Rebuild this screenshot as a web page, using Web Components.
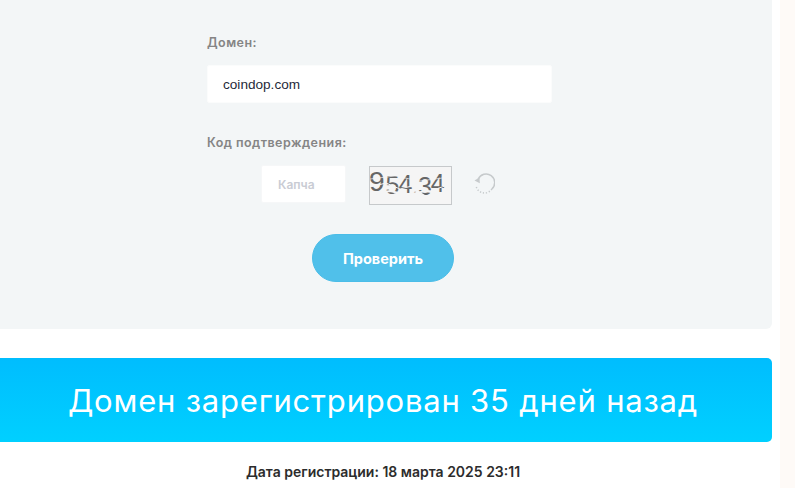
<!DOCTYPE html>
<html><head><meta charset="utf-8">
<style>
html,body{margin:0;padding:0;background:#fff;overflow:hidden;height:488px}
body{display:flex;font-family:"Inter","Noto Sans",sans-serif}
</style></head><body>
<page-shell>
  <check-panel domain="coindop.com"></check-panel>
  <age-banner>Домен зарегистрирован 35 дней назад</age-banner>
  <reg-date>Дата регистрации: 18 марта 2025 23:11</reg-date>
</page-shell>
<script>
const def=(name,html,init)=>customElements.define(name,class extends HTMLElement{
  constructor(){super();this.attachShadow({mode:'open'}).innerHTML=html;}
  connectedCallback(){init&&init(this)}
});
def('page-shell',`<style>
:host{display:flex;width:801px;height:488px;margin-left:-6px;flex:none;overflow:hidden}
.main{width:778px;flex:none;display:flex;flex-direction:column}
.strip{width:15px;margin-left:8px;flex:none;background:#fefaf7}
</style><div class="main"><slot></slot></div><div class="strip"></div>`);
def('check-panel',`<style>
:host{display:block;height:329px;background:#f3f6f7;border-radius:0 0 6px 6px;font-family:"Inter",sans-serif;padding:35px 0 0 213px;box-sizing:border-box}
.form{width:345px;display:flex;flex-direction:column;align-items:stretch}
label{font-size:12.5px;line-height:16px;font-weight:600;color:#858585;letter-spacing:.45px}
.domain{height:38px;margin-top:14px;background:#fff;border:1px solid #fbfcfc;box-sizing:border-box;border-radius:2px;display:flex;align-items:center;padding-left:15px;font:13.6px "Liberation Sans",sans-serif;color:#1f2a3a}
.l2{margin-top:32px}
.row{display:flex;align-items:flex-start;margin-top:14px;padding-left:54px;height:40px}
.cap{width:85px;height:38px;background:#fff;border:1px solid #f6f7f8;box-sizing:border-box;border-radius:2px;display:flex;align-items:center;padding-left:16px;font-size:12px;font-weight:600;color:#c9ccd4}
.img{width:83px;height:39px;margin:1px 0 0 23px;box-sizing:border-box;border:1px solid #c6c9cb;background:#f5f5f5;position:relative;overflow:hidden;font:24px/34px "Liberation Sans",sans-serif;color:#666;white-space:nowrap;display:flex;align-items:flex-start}
.img span{display:inline-block;line-height:30px}
.a{font-size:28px;margin-left:-1px}
.b{font-size:25px;margin:3px 0 0 1px}
.c{font-size:25px;margin-top:2px;margin-left:-1px}
.d{font-size:20px;margin:5px 0 0 0}
.e{font-size:25px;margin:4px 0 0 0}
.f{font-size:25px;margin:1px 0 0 -1px}
.img svg{position:absolute;left:0;top:0}
.ref{margin:8px 0 0 21px;width:22px;height:22px}
.btn{align-self:flex-start;margin:29px 0 0 105px;width:142px;height:48px;border-radius:24px;background:#50c0ea;border:1px solid #4abde8;box-sizing:border-box;color:#fff;font-size:14.5px;font-weight:700;display:flex;align-items:center;justify-content:center}
</style>
<div class="form">
<label>Домен:</label>
<div class="domain" id="d"></div>
<label class="l2">Код подтверждения:</label>
<div class="row">
 <div class="cap">Капча</div>
 <div class="img"><span class="a">9</span><span class="b">5</span><span class="c">4</span><span class="d">.</span><span class="e">3</span><span class="f">4</span><svg width="81" height="37" fill="none" stroke="#f5f5f5"><path d="M0 20 L16 16 L30 22 L46 18 L60 24 L81 17" stroke-width="1"/><path d="M2 27 L20 24 L38 28 L55 24 L80 28" stroke-width="1.8"/><path d="M0 12 L25 9 L50 14 L80 10" stroke-width=".7"/><path d="M44 22 L58 31" stroke-width="1.6"/><path d="M14 14 L28 30" stroke-width=".7"/></svg></div>
 <svg class="ref" viewBox="0 0 22 22" fill="none"><path d="M5.2 6.2A8.6 8.6 0 1 1 18.8 16" stroke="#c6cacc" stroke-width="1.5"/><path d="M18.8 16A8.6 8.6 0 0 1 3 12.5" stroke="#c6cacc" stroke-width="1.5" stroke-dasharray="1.2 1.8"/><path d="M1.5 7.5L6.5 4.6L6.8 10.2Z" fill="#c6cacc"/></svg>
</div>
<div class="btn">Проверить</div>
</div>`,el=>{el.shadowRoot.getElementById('d').textContent=el.getAttribute('domain')});
def('age-banner',`<style>
:host{display:flex;height:84px;margin-top:29px;flex:none;align-items:center;justify-content:center;border-radius:5px;background:linear-gradient(#00bdfe,#00d0ff);color:#fff;font:400 31px "Inter",sans-serif;letter-spacing:.8px;white-space:nowrap}
</style><slot></slot>`);
def('reg-date',`<style>
:host{display:block;margin-top:21px;text-align:center;font:600 14px/18px "Inter",sans-serif;color:#2c2c2c;white-space:nowrap}
</style><slot></slot>`);
</script></body></html>
